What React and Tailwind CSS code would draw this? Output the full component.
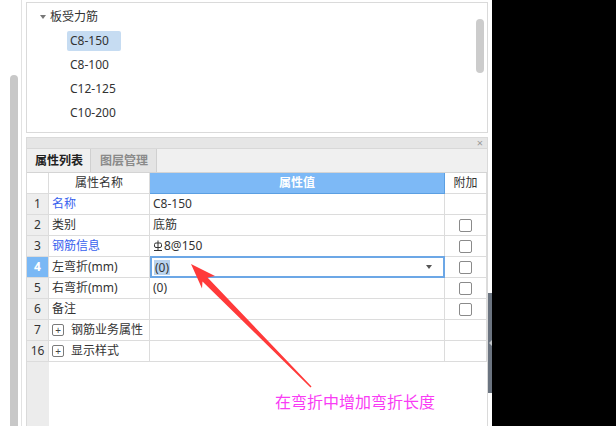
import React from "react";

const rows = [
  { n: "1", name: "名称", blue: true, value: "C8-150", check: false },
  { n: "2", name: "类别", value: "底筋", check: true },
  { n: "3", name: "钢筋信息", blue: true, value: "8@150", rebar: true, check: true },
  { n: "4", name: "左弯折(mm)", value: "(0)", selected: true, check: true },
  { n: "5", name: "右弯折(mm)", value: "(0)", check: true },
  { n: "6", name: "备注", value: "", check: true },
  { n: "7", name: "钢筋业务属性", group: true },
  { n: "16", name: "显示样式", group: true },
];

function RebarGlyph() {
  return (
    <svg width="10" height="12" viewBox="0 0 10 12" className="mr-px">
      <path d="M5 0.5 V10.5" stroke="#333" strokeWidth="1" fill="none" />
      <rect x="1.5" y="3" width="7" height="4.5" rx="1.5" stroke="#333" strokeWidth="1" fill="none" />
      <path d="M1 10.5 H9" stroke="#333" strokeWidth="1" fill="none" />
    </svg>
  );
}

function Check() {
  return <div className="w-[13px] h-[13px] rounded-[2px] border border-[#8a8a8a] bg-white"></div>;
}

function PlusBox() {
  return (
    <div className="w-[12px] h-[12px] rounded-[2px] border border-[#7a7a7a] flex items-center justify-center text-[10px] leading-none text-[#444] mr-[7px]">
      +
    </div>
  );
}

function App() {
  return (
    <div className="w-[616px] h-[426px] flex bg-white overflow-hidden relative font-['Noto_Sans','Noto_Sans_CJK_SC',sans-serif] text-[12px] text-[#333]">
      {/* left strip with scrollbar */}
      <div className="w-[26px] shrink-0 flex">
        <div className="w-[10px]"></div>
        <div className="w-[8px] pt-[75px]">
          <div className="h-full bg-[#c8c8c8] rounded-t-full"></div>
        </div>
        <div className="w-[3px]"></div>
        <div className="w-px bg-[#e2e2e2]"></div>
      </div>

      {/* main column */}
      <div className="w-[462px] shrink-0 flex flex-col pt-[2px] gap-[4px]">
        {/* tree panel */}
        <div className="h-[131px] border border-[#dadada] flex">
          <div className="flex-1 pt-[4px]">
            <div className="h-[20px] flex items-center pl-[13px]">
              <div className="w-0 h-0 border-l-[3px] border-r-[3px] border-t-[4px] border-l-transparent border-r-transparent border-t-[#777] mr-[4px]"></div>
              <span>板受力筋</span>
            </div>
            <div className="mt-[2px] pl-[40px]">
              {["C8-150", "C8-100", "C12-125", "C10-200"].map((t, i) => (
                <div key={t} className="h-[24px] flex items-center">
                  <div className={`h-[20px] w-[54px] flex items-center pl-[3px] rounded-[2px] ${i === 0 ? "bg-[#c6dcf2]" : ""}`}>
                    {t}
                  </div>
                </div>
              ))}
            </div>
          </div>
          <div className="w-[8px] mr-[3px] pt-[16px]">
            <div className="h-[54px] bg-[#cccccc] rounded-full"></div>
          </div>
        </div>

        {/* property panel */}
        <div className="flex-1 border border-b-0 border-[#dadada] flex flex-col">
          <div className="h-[11px] bg-[#e6e6e6] border-b border-[#d8d8d8] flex items-center justify-end pr-[4px]">
            <span className="text-[11px] leading-none text-[#9a9a9a] -mt-px">×</span>
          </div>
          <div className="h-[24px] bg-[#f0f0f0] border-b border-[#d4d4d4] flex items-end">
            <div className="h-[23px] w-[64px] border-r border-[#d0d0d0] flex items-center pl-[8px] font-bold text-[#222]">
              属性列表
            </div>
            <div className="h-[23px] w-[66px] bg-[#e4e4e4] border-r border-[#d0d0d0] flex items-center pl-[9px] font-bold text-[#8a8a8a]">
              图层管理
            </div>
          </div>

          {/* table header */}
          <div className="flex h-[21px]">
            <div className="w-[22px] border-r border-b border-[#dcdcdc] bg-white"></div>
            <div className="w-[101px] border-r border-b border-[#dcdcdc] flex items-center justify-center">属性名称</div>
            <div className="w-[295px] border-r border-b border-[#5b9fe2] bg-[#7db9f6] flex items-center justify-center text-white font-bold">
              属性值
            </div>
            <div className="w-[42px] border-r border-b border-[#dcdcdc] flex items-center justify-center">附加</div>
          </div>

          {rows.map((r) => (
            <div key={r.n} className="flex h-[21px]">
              <div
                className={`w-[22px] border-r border-b border-[#dcdcdc] flex items-center justify-center ${
                  r.selected ? "bg-[#7ab8f5] text-white font-bold" : "bg-[#eeeeee]"
                }`}
              >
                {r.n}
              </div>
              <div className={`w-[101px] border-r border-b border-[#dcdcdc] flex items-center pl-[3px] ${r.blue ? "text-[#3862ee]" : ""}`}>
                {r.group && <PlusBox />}
                {r.name}
              </div>
              {r.selected ? (
                <div className="w-[295px] -mt-px h-[22px] border-2 border-[#6ca7e6] flex items-center pl-[2px] pr-[11px]">
                  <span className="bg-[#b9d3ee] px-px leading-[15px]">{r.value}</span>
                  <span className="ml-auto w-0 h-0 border-l-[3px] border-r-[3px] border-t-[4px] border-l-transparent border-r-transparent border-t-[#555]"></span>
                </div>
              ) : (
                <div className="w-[295px] border-r border-b border-[#dcdcdc] flex items-center pl-[3px]">
                  {r.rebar && <RebarGlyph />}
                  {r.value}
                </div>
              )}
              <div className="w-[42px] border-r border-b border-[#dcdcdc] flex items-center justify-center">
                {r.check && <Check />}
              </div>
            </div>
          ))}

          <div className="flex-1 flex">
            <div className="w-[22px] bg-[#ececec]"></div>
          </div>
        </div>
      </div>

      {/* splitter */}
      <div className="w-[4px] shrink-0 pt-[293px]">
        <div className="h-[100px] bg-[#6b7480] flex items-center justify-center">
          <div className="w-0 h-0 border-t-[3px] border-b-[3px] border-r-[3px] border-t-transparent border-b-transparent border-r-[#c0c4c8]"></div>
        </div>
      </div>

      <div className="flex-1 bg-black"></div>

      {/* annotation arrow */}
      <svg className="absolute left-0 top-0 pointer-events-none" width="616" height="426" viewBox="0 0 616 426">
        <polygon
          points="191,264 215,276 207.5,277.5 311.5,386.5 310.5,387.5 202.5,281.5 202,288.5"
          fill="#ff3a3a"
        />
      </svg>
      <div className="absolute left-[275px] top-[393px] text-[16px] leading-[18px] text-[#f93cf5] whitespace-nowrap">
        在弯折中增加弯折长度
      </div>
    </div>
  );
}

export default App;
